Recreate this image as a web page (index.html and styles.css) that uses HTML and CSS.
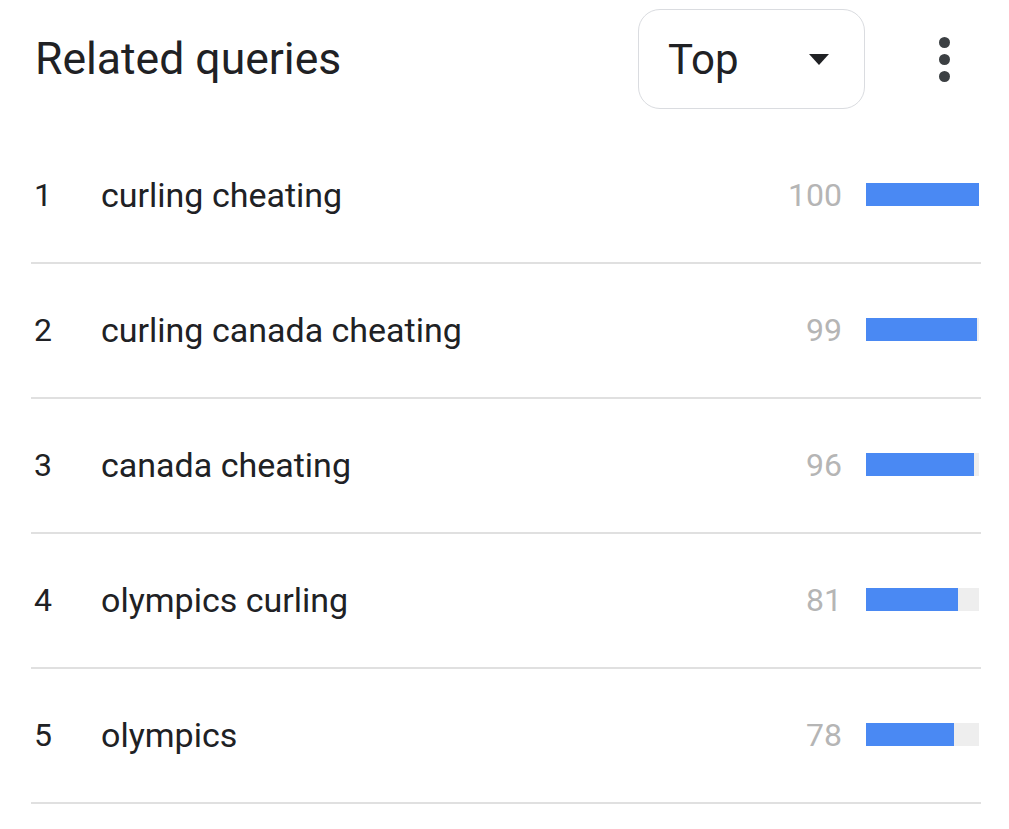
FILE: index.html
```html
<!DOCTYPE html>
<html lang="en">
<head>
<meta charset="utf-8">
<title>Related queries</title>
<link rel="stylesheet" href="styles.css">
</head>
<body>
<div class="card">
  <div class="header">
    <h1 class="title">Related queries</h1>
    <div class="select">
      <span class="select-label">Top</span>
      <svg class="caret" width="20" height="11" viewBox="0 0 20 11"><path d="M0 0H20L10 11Z" fill="#202124"/></svg>
    </div>
    <div class="kebab">
      <span class="dot"></span><span class="dot"></span><span class="dot"></span>
    </div>
  </div>
  <ul class="list">
    <li class="row"><span class="rank">1</span><span class="query">curling cheating</span><span class="value">100</span><span class="track"><span class="fill" style="width:100%"></span></span></li>
    <li class="row"><span class="rank">2</span><span class="query">curling canada cheating</span><span class="value">99</span><span class="track"><span class="fill" style="width:98%"></span></span></li>
    <li class="row"><span class="rank">3</span><span class="query">canada cheating</span><span class="value">96</span><span class="track"><span class="fill" style="width:96%"></span></span></li>
    <li class="row"><span class="rank">4</span><span class="query">olympics curling</span><span class="value">81</span><span class="track"><span class="fill" style="width:81%"></span></span></li>
    <li class="row"><span class="rank">5</span><span class="query">olympics</span><span class="value">78</span><span class="track"><span class="fill" style="width:78%"></span></span></li>
  </ul>
</div>
</body>
</html>
```

FILE: styles.css
```css
html, body {
  margin: 0;
  padding: 0;
  background: #ffffff;
}
body {
  font-family: Roboto, "Noto Sans", Arial, sans-serif;
  color: #202124;
}
.card {
  width: 1009px;
  height: 829px;
  overflow: hidden;
}
.header {
  display: flex;
  align-items: center;
  padding: 9px 0 0 35px;
  height: 100px;
}
.title {
  margin: 0;
  font-size: 44.5px;
  font-weight: 400;
  flex: 1;
  letter-spacing: 0;
}
.select {
  width: 227px;
  height: 100px;
  box-sizing: border-box;
  border: 1.5px solid #dadce0;
  border-radius: 22px;
  display: flex;
  align-items: center;
  padding: 0 35px 0 29px;
}
.select-label {
  font-size: 42px;
  flex: 1;
}
.caret {
  display: block;
}
.kebab {
  width: 54px;
  margin: 0 38px 0 52px;
  display: flex;
  flex-direction: column;
  align-items: center;
  gap: 6px;
}
.dot {
  width: 11px;
  height: 11px;
  border-radius: 50%;
  background: #3c4043;
}
.list {
  list-style: none;
  margin: 20px 28px 0 31px;
  padding: 0;
}
.row {
  display: flex;
  align-items: center;
  height: 131px;
  padding-bottom: 2px;
  border-bottom: 2px solid #e0e0e0;
  font-size: 32px;
}
.rank {
  width: 70px;
  padding-left: 3px;
  box-sizing: border-box;
}
.query {
  flex: 1;
  font-size: 34px;
}
.value {
  color: #b5b5b5;
  text-align: right;
  margin-right: 24px;
}
.track {
  width: 113px;
  height: 23px;
  background: #eeeeee;
  margin-right: 2px;
  display: flex;
}
.fill {
  height: 100%;
  background: #4a89f3;
}
```
